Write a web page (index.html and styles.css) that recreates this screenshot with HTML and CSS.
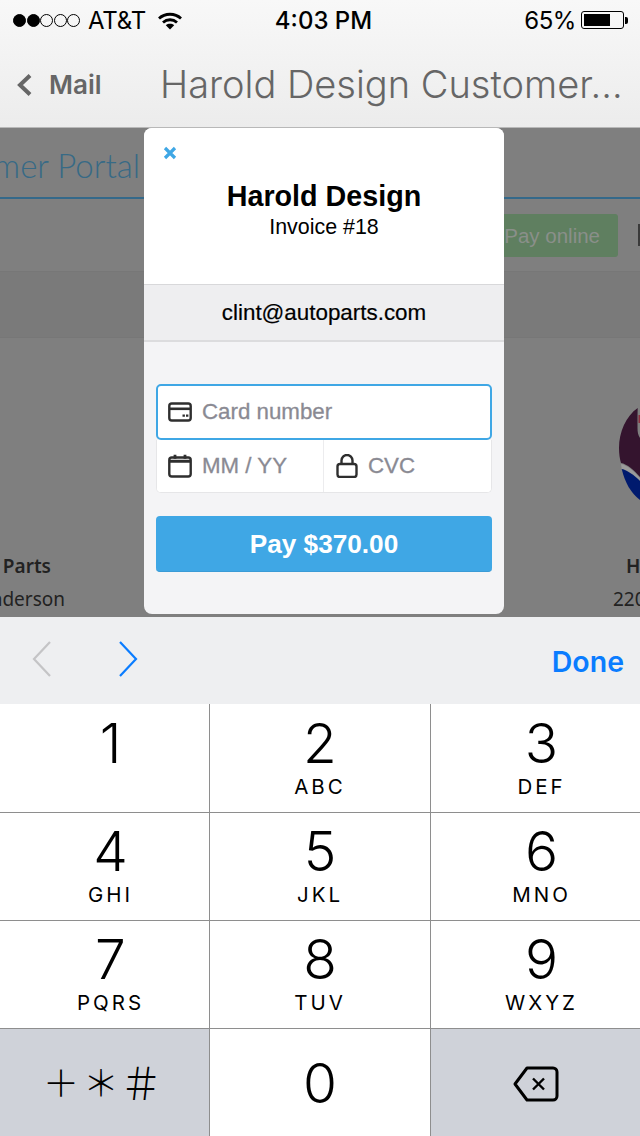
FILE: index.html
```html
<!DOCTYPE html>
<html lang="en">
<head>
<meta charset="utf-8">
<title>Harold Design Customer Portal</title>
<link rel="stylesheet" href="styles.css">
</head>
<body>
<div class="screen">
  <header class="chrome">
    <div class="status">
      <div class="status-left">
        <span class="signal"><i class="dot on"></i><i class="dot on"></i><i class="dot"></i><i class="dot"></i><i class="dot"></i></span>
        <span class="carrier">AT&amp;T</span>
        <svg class="wifi" viewBox="0 0 24 18" width="24" height="18"><path d="M1 6.5C7 .8 17 .8 23 6.5" fill="none" stroke="#000" stroke-width="2.8"/><path d="M5 10.5C9 6.8 15 6.8 19 10.5" fill="none" stroke="#000" stroke-width="2.8"/><path d="M7.8 13.2C10.2 11.3 13.8 11.3 16.2 13.2L12 17.6Z" fill="#000"/></svg>
      </div>
      <div class="clock">4:03 PM</div>
      <div class="status-right">
        <span class="percent">65%</span>
        <span class="battery"><span class="battery-fill"></span></span>
        <span class="battery-cap"></span>
      </div>
    </div>
    <div class="nav">
      <div class="back">
        <svg viewBox="0 0 16 24" width="16" height="24"><path d="M14 2.5L4 12l10 9.5" fill="none" stroke="#666" stroke-width="4"/></svg>
        <span>Mail</span>
      </div>
      <div class="nav-title">Harold Design Customer…</div>
    </div>
  </header>

  <main class="dim">
    <div class="portal-head"><div class="side-left"><span class="portal-title">mer Portal</span></div></div>
    <div class="portal-tools"><span class="pay-online">Pay online</span><span class="tool-box"></span></div>
    <div class="portal-band"></div>
    <div class="portal-body">
      <div class="party-left">
        <div class="party-name">Parts</div>
        <div class="party-line">nderson</div>
      </div>
      <div class="party-right">
        <svg class="logo" viewBox="0 0 21 92" width="21" height="92">
          <path d="M2 56C8 57 15 63 21 70v3C15 67 8 62 2.7 61z" fill="#9b9b9b"/>
          <path d="M18.7 0C7 8 0 24 0 40c0 6 .8 11 2 15 6 1 13 7 19 14V30c-2-3-2.500-6-2.500-10 0-8 0-15 .2-20z" fill="#34142e"/>
          <rect x="19.500" y="7" width="1.500" height="8" fill="#8a2f3f"/>
          <path d="M2.700 61C8 62 15 67 21 73v19C12 85 6 75 2.700 61z" fill="#001a6e"/>
        </svg>
        <div class="party-name">H</div>
        <div class="party-line">220</div>
      </div>
    </div>

    <section class="modal">
      <div class="modal-top">
        <svg class="close" viewBox="0 0 14 14" width="14" height="14"><path d="M2 2l10 10M12 2L2 12" stroke="#3fa7e5" stroke-width="3.2" fill="none"/></svg>
        <h1>Harold Design</h1>
        <p>Invoice #18</p>
      </div>
      <div class="modal-email">clint@autoparts.com</div>
      <form class="modal-form">
        <div class="field field-card">
          <svg class="ficon" viewBox="0 0 24 20" width="24" height="20"><rect x="1.3" y="1.5" width="21.4" height="17" rx="2.5" fill="none" stroke="#2e2e2e" stroke-width="2.4"/><path d="M1.5 6.8h21" stroke="#2e2e2e" stroke-width="2.6"/><path d="M14.5 13.7h2.4M18 13.7h2.4" stroke="#2e2e2e" stroke-width="2.2"/></svg>
          <span>Card number</span>
        </div>
        <div class="field-pair">
          <div class="field field-date">
            <svg class="ficon" viewBox="0 0 24 24" width="24" height="24"><rect x="1.3" y="3.5" width="21.4" height="19" rx="2.5" fill="none" stroke="#2e2e2e" stroke-width="2.4"/><path d="M1.5 7.2h21" stroke="#2e2e2e" stroke-width="3"/><path d="M7 .8v4M17 .8v4" stroke="#2e2e2e" stroke-width="2.8"/></svg>
            <span>MM / YY</span>
          </div>
          <div class="field field-cvc">
            <svg class="ficon" viewBox="0 0 22 24" width="22" height="24"><rect x="1.500" y="10" width="19" height="13" rx="2.500" fill="none" stroke="#2e2e2e" stroke-width="2.4"/><path d="M5.500 10V6.500a5.500 5.500 0 0 1 11 0V10" fill="none" stroke="#2e2e2e" stroke-width="2.4"/></svg>
            <span>CVC</span>
          </div>
        </div>
        <div class="pay-button">Pay $370.00</div>
      </form>
    </section>
  </main>

  <div class="accessory">
    <svg viewBox="0 0 20 38" width="20" height="38"><path d="M18 2L2 19l16 17" fill="none" stroke="#c4c4c6" stroke-width="2.2"/></svg>
    <svg class="next" viewBox="0 0 20 38" width="20" height="38"><path d="M2 2l16 17L2 36" fill="none" stroke="#0a7cff" stroke-width="2.2"/></svg>
    <span class="done">Done</span>
  </div>

  <div class="keypad">
    <div class="key"><span class="digit">1</span></div>
    <div class="key"><span class="digit">2</span><span class="letters">ABC</span></div>
    <div class="key"><span class="digit">3</span><span class="letters">DEF</span></div>
    <div class="key"><span class="digit">4</span><span class="letters">GHI</span></div>
    <div class="key"><span class="digit">5</span><span class="letters">JKL</span></div>
    <div class="key"><span class="digit">6</span><span class="letters">MNO</span></div>
    <div class="key"><span class="digit">7</span><span class="letters">PQRS</span></div>
    <div class="key"><span class="digit">8</span><span class="letters">TUV</span></div>
    <div class="key"><span class="digit">9</span><span class="letters">WXYZ</span></div>
    <div class="key key-gray"><span class="symbols">＋＊<span class="hash">＃</span></span></div>
    <div class="key key-zero"><span class="digit">0</span></div>
    <div class="key key-gray">
      <svg class="backspace" viewBox="0 0 46 36" width="46" height="36"><path d="M14 2h26a4 4 0 0 1 4 4v24a4 4 0 0 1-4 4H14L2 18Z" fill="none" stroke="#000" stroke-width="3" stroke-linejoin="round"/><path d="M20 12.500l11 11M31 12.500l-11 11" stroke="#000" stroke-width="2.4"/></svg>
    </div>
  </div>
</div>
</body>
</html>
```
FILE: styles.css
```css
* { box-sizing: border-box; }
html, body { margin: 0; padding: 0; }
body { width: 640px; height: 1136px; overflow: hidden; background: #fff; font-family: "Inter", "Liberation Sans", sans-serif; color: #000; }
.screen { width: 640px; height: 1136px; display: flex; flex-direction: column; }

.chrome { height: 128px; background: linear-gradient(#f8f8f8, #ececec); border-bottom: 1px solid #b8b8b8; display: flex; flex-direction: column; flex: none; }
.status { height: 40px; display: grid; grid-template-columns: 1fr auto 1fr; align-items: center; padding: 0 12px 0 13px; font-family: "Inter", sans-serif; font-size: 24px; }
.status-left { display: flex; align-items: center; }
.signal { display: flex; gap: 0.5px; margin-right: 8px; }
.dot { width: 13px; height: 13px; border-radius: 50%; border: 1px solid #000; }
.dot.on { background: #000; }
.carrier { letter-spacing: -0.2px; }
.wifi { margin-left: 12px; margin-top: 2px; }
.clock { font-weight: 500; margin-left: 6px; }
.status-right { display: flex; align-items: center; justify-content: flex-end; }
.percent { margin-right: 5px; letter-spacing: -0.4px; }
.battery { width: 43px; height: 18px; border: 1px solid #000; border-radius: 3px; padding: 2px; display: flex; }
.battery-fill { width: 26px; background: #000; }
.battery-cap { width: 3px; height: 7px; margin-left: 1px; background: #000; border-radius: 0 2px 2px 0; }

.nav { flex: 1; display: flex; align-items: center; padding: 2px 0 0 16px; color: #666; }
.back { display: flex; align-items: center; width: 144px; font-family: "Inter", sans-serif; font-weight: 600; font-size: 26px; gap: 17px; }
.nav-title { font-family: "Inter", sans-serif; font-weight: 300; font-size: 38px; white-space: nowrap; margin-top: -1px; }

.dim { position: relative; height: 489px; flex: none; background: #7f7f7f; display: flex; flex-direction: column; font-family: "Noto Sans", sans-serif; overflow: hidden; }
.portal-head { height: 71px; border-bottom: 2px solid #34698a; flex: none; }
.side-left { width: 140px; height: 100%; overflow: hidden; display: flex; justify-content: flex-end; align-items: center; padding-top: 4px; }
.portal-title { font-family: "Lato", sans-serif; font-weight: 300; font-size: 33px; color: #376a86; white-space: nowrap; flex: none; }
.portal-tools { height: 73px; flex: none; display: flex; align-items: center; justify-content: flex-end; border-bottom: 1px solid #777; }
.pay-online { width: 118px; height: 43px; margin: 1px 20px 0 0; background: #5f7f60; border-radius: 3px; color: #8a8f8a; font-size: 20.5px; font-family: "Liberation Sans", sans-serif; display: flex; align-items: center; justify-content: flex-end; padding-right: 18px; }
.tool-box { width: 2px; height: 22px; background: #3a3a3a; }
.portal-band { height: 66px; background: #7a7a7a; border-bottom: 1px solid #777; flex: none; }
.portal-body { flex: 1; display: flex; justify-content: space-between; color: #222; font-size: 19px; line-height: 33px; }
.party-left { width: 65px; display: flex; flex-direction: column; align-items: flex-end; padding-top: 212px; }
.party-right { width: 27px; padding-top: 70px; }
.party-left div, .party-right div { white-space: nowrap; flex: none; }
.party-left .party-name { margin-right: 14px; }
.party-name { font-weight: 600; }
.logo { display: block; margin: 0 0 50px 6px; }
.party-right .party-name { margin-left: 13px; }

.modal { position: absolute; left: 144px; top: 0; width: 360px; height: 486px; background: #f4f4f6; border-radius: 8px; overflow: hidden; font-family: "Liberation Sans", sans-serif; display: flex; flex-direction: column; }
.modal-top { height: 156px; background: #fff; padding: 18px 0 0 19px; flex: none; text-align: center; display: flex; flex-direction: column; }
.close { display: block; flex: none; }
.modal-top h1 { margin: 19px 19px 0 0; font-size: 28.7px; line-height: 34px; font-weight: 700; }
.modal-top p { margin: 1px 19px 0 0; font-size: 21.4px; line-height: 26px; }
.modal-email { height: 58px; flex: none; background: #eeeef0; border-top: 1px solid #d8d8da; border-bottom: 2px solid #dcdcde; display: flex; align-items: center; justify-content: center; font-size: 22.4px; -webkit-text-stroke: 0.2px #000; }
.modal-form { padding: 42px 12px 0; display: flex; flex-direction: column; }
.field { background: #fff; display: flex; align-items: center; color: #8a8a93; font-size: 22.3px; -webkit-text-stroke: 0.3px #8a8a93; }
.field-card { height: 56px; border: 2px solid #3fa7e5; border-radius: 5px; padding-left: 10px; }
.ficon { flex: none; margin-right: 10px; }
.field-pair { display: flex; height: 53px; border: 1px solid #e6e6e8; border-top: 0; border-radius: 0 0 5px 5px; background: #fff; overflow: hidden; }
.field-date { width: 167px; padding: 0 0 1px 11px; border-right: 1px solid #ececee; }
.field-cvc { flex: 1; padding: 0 0 1px 12px; }
.pay-button { margin-top: 23px; height: 56px; padding-top: 2px; background: #3fa7e5; border-bottom: 1px solid #3a9bd6; border-radius: 4px; color: #fff; font-weight: 700; font-size: 26.2px; display: flex; align-items: center; justify-content: center; }

.accessory { flex: 1; background: #eeeff1; display: flex; align-items: center; padding: 0 16px 4px 32px; }
.next { margin-left: 66px; }
.done { margin: 6px 0 0 auto; color: #0a7cff; font-weight: 600; font-size: 28.5px; }

.keypad { height: 432px; flex: none; display: grid; grid-template-columns: 210px 221px 209px; grid-template-rows: 109px 108px 108px 107px; background: #fff; }
.key { display: flex; flex-direction: column; align-items: center; border-right: 1px solid #8e8e8e; border-bottom: 1px solid #8e8e8e; padding-top: 5px; }
.key:nth-child(-n+3) { padding-top: 6px; }
.key:nth-child(3n) { border-right: 0; padding-left: 12px; }
.key:nth-child(3n+1) { padding-left: 12px; }
.key:nth-child(n+10) { border-bottom: 0; padding-left: 0; padding-top: 0; }
.digit { font-family: "Inter", sans-serif; font-weight: 300; font-size: 55px; line-height: 66px; }
.letters { font-family: "Inter", sans-serif; font-size: 20.5px; line-height: 22px; letter-spacing: 3px; }
.key-gray { background: #cfd2d9; justify-content: center; }
.key-zero { justify-content: center; }
.symbols { font-family: "Noto Sans CJK JP", sans-serif; font-weight: 300; font-size: 36px; line-height: 60px; letter-spacing: 4px; padding: 0 3px 3px 0; white-space: nowrap; }
.hash { font-size: 43px; margin: 0 -3.5px; line-height: 0; vertical-align: -2.5px; }
.backspace { margin: 3px 0 0 0; }
```
